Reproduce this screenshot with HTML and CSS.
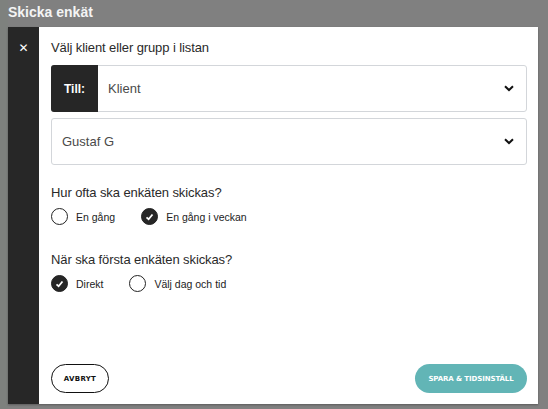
FILE: index.html
```html
<!DOCTYPE html>
<html lang="sv">
<head>
  <meta charset="UTF-8" />
  <title>Skicka enkät</title>
  <link rel="stylesheet" href="styles.css">
</head>
<body>
<div class="page">
  <div class="page-title">Skicka enkät</div>
  <div class="page-btn"></div>
  <div class="page-line line-a"></div>
  <div class="page-line line-b"></div>
</div>

<div class="overlay">
  <div class="modal">
    <div class="side">
      <button class="close">&#x2715;</button>
    </div>
    <div class="content">
      <div class="label">Välj klient eller grupp i listan</div>

      <div class="select">
        <span class="prefix">Till:</span>
        <span class="value">Klient</span>
        <svg class="chev" width="10" height="7" viewBox="0 0 10 7"><path d="M1 1.2 L5 5 L9 1.2" fill="none" stroke="#111" stroke-width="2"/></svg>
      </div>

      <div class="select">
        <span class="value">Gustaf G</span>
        <svg class="chev" width="10" height="7" viewBox="0 0 10 7"><path d="M1 1.2 L5 5 L9 1.2" fill="none" stroke="#111" stroke-width="2"/></svg>
      </div>

      <div class="group">
        <div class="label">Hur ofta ska enkäten skickas?</div>
        <div class="radios">
          <label class="radio"><span class="dot"></span>En gång</label>
          <label class="radio"><span class="dot on"><svg width="9" height="8" viewBox="0 0 9 8"><path d="M1.5 4.3 L3.6 6.2 L7.5 1.5" fill="none" stroke="#fff" stroke-width="1.8"/></svg></span>En gång i veckan</label>
        </div>
      </div>

      <div class="group">
        <div class="label">När ska första enkäten skickas?</div>
        <div class="radios">
          <label class="radio"><span class="dot on"><svg width="9" height="8" viewBox="0 0 9 8"><path d="M1.5 4.3 L3.6 6.2 L7.5 1.5" fill="none" stroke="#fff" stroke-width="1.8"/></svg></span>Direkt</label>
          <label class="radio"><span class="dot"></span>Välj dag och tid</label>
        </div>
      </div>

      <div class="footer">
        <button class="btn cancel">AVBRYT</button>
        <button class="btn save">SPARA &amp; TIDSINSTÄLL</button>
      </div>
    </div>
  </div>
</div>
</body>
</html>
```

FILE: styles.css
```css
body { margin: 0; font-family: "Liberation Sans", Arial, sans-serif; background: #7f7f7f; width: 548px; height: 409px; overflow: hidden; }
.page { position: absolute; inset: 0; background: #808080; }
.page-title { position: absolute; left: 8px; top: 4px; color: #f4f4f4; font-weight: bold; font-size: 14px; }
.page-btn { position: absolute; left: 5px; top: 58px; width: 10px; height: 22px; border: 1px solid #222; border-radius: 3px; }
.page-line { position: absolute; left: 0; width: 8px; height: 1px; background: #333; }
.line-a { top: 95px; }
.line-b { top: 323px; }

.overlay { position: absolute; inset: 0; background: linear-gradient(to right, #7e817e 8px, transparent 8px); }
.modal { position: absolute; left: 8px; top: 27px; width: 530px; height: 377px; display: flex; background: #fff; box-shadow: 0 1px 2px rgba(0,0,0,0.3); }
.side { width: 31px; background: #272727; display: flex; justify-content: center; }
.close { margin-top: 14px; height: 14px; padding: 0; background: none; border: none; color: #fff; font-size: 12px; font-weight: bold; cursor: pointer; font-family: "DejaVu Sans", sans-serif; }
.content { flex: 1; padding: 13px 11px 11px 12px; display: flex; flex-direction: column; }

.label { font-size: 13px; color: #2a2a2a; line-height: 16px; letter-spacing: -0.1px; }
.select { margin-top: 9px; height: 45px; border: 1px solid #d3d6da; border-radius: 3px; display: flex; align-items: center; }
.select + .select { margin-top: 6px; }
.prefix { align-self: stretch; width: 47px; margin: -1px 0 -1px -1px; background: #262626; color: #fff; font-weight: bold; font-size: 12px; border-radius: 3px 0 0 3px; display: flex; align-items: center; justify-content: center; }
.value { flex: 1; padding-left: 10px; font-size: 13px; color: #4a4a4a; }
.chev { margin-right: 12px; }

.group { margin-top: 20px; }
.group + .group { margin-top: 27px; }
.radios { display: flex; gap: 26px; margin-top: 7px; }
.radio { display: flex; align-items: center; font-size: 10.5px; color: #222; }
.dot { width: 15px; height: 15px; border: 1px solid #222; border-radius: 50%; margin-right: 8px; display: flex; align-items: center; justify-content: center; }
.dot.on { background: #262626; }

.footer { margin-top: auto; display: flex; justify-content: space-between; }
.btn { height: 29px; border-radius: 15px; font-family: "DejaVu Sans", sans-serif; font-weight: bold; font-size: 7px; cursor: pointer; padding: 0; }
.cancel { width: 58px; background: #fff; border: 1px solid #111; color: #111; letter-spacing: 0.3px; }
.save { width: 112px; background: #62b5b6; border: none; color: #fff; letter-spacing: -0.1px; }
```
